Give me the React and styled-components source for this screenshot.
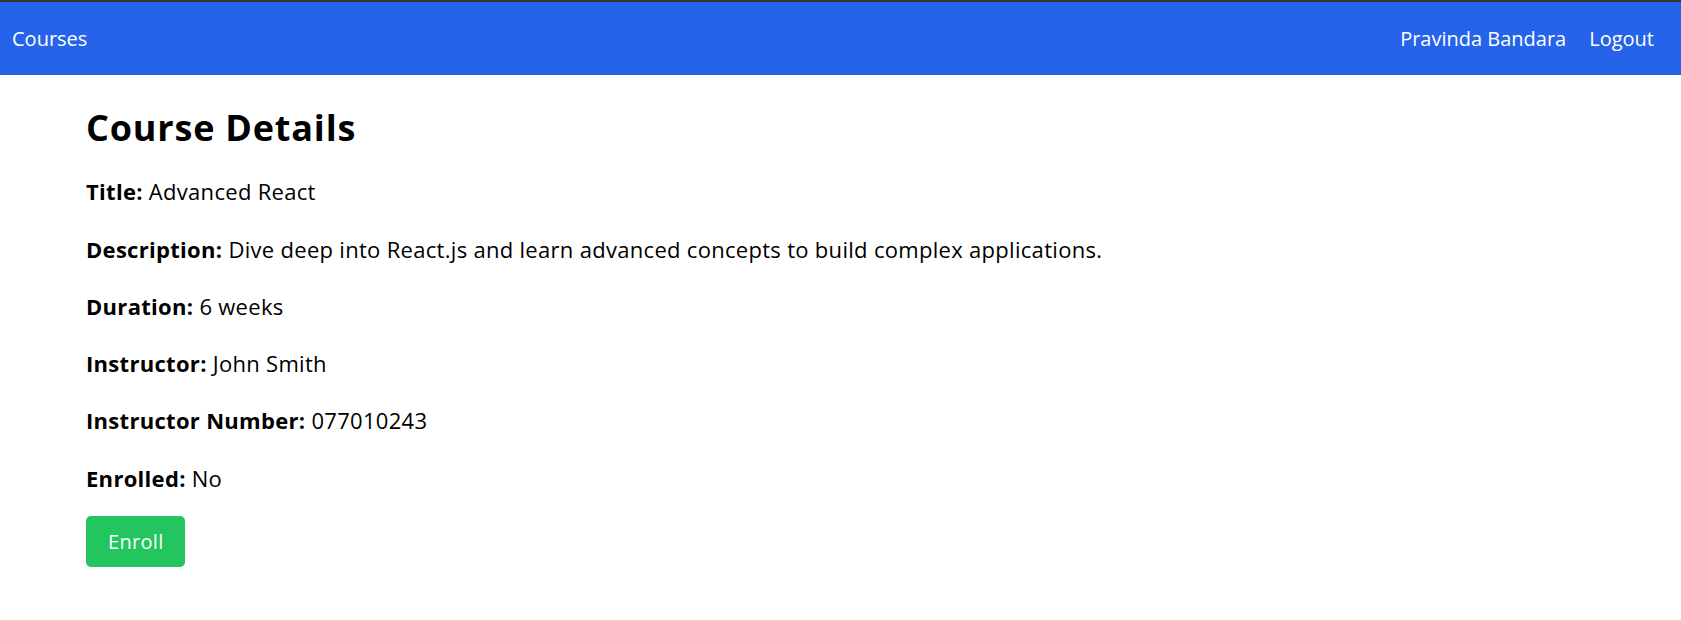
import styled, { createGlobalStyle } from "styled-components";

const GlobalStyle = createGlobalStyle`
  body {
    margin: 0;
    background: #fff;
    font-family: "Open Sans", "Noto Sans", sans-serif;
    color: #000;
  }
`;

const Page = styled.div`
  border-top: 2px solid #363636;
`;

const NavBar = styled.nav`
  height: 73px;
  background-color: #2563eb;
  display: flex;
  align-items: center;
  justify-content: space-between;
  padding: 0 27px 0 12px;
  color: #fff;
  font-size: 20px;
`;

const NavLinks = styled.div`
  display: flex;
  align-items: center;
  gap: 23px;
`;

const NavLink = styled.a`
  color: inherit;
  text-decoration: none;
  cursor: pointer;
`;

const Content = styled.main`
  padding: 31px 86px 40px;
  display: flex;
  flex-direction: column;
  align-items: flex-start;
  gap: 25.3px;
`;

const Heading = styled.h1`
  margin: 0;
  font-size: 36px;
  line-height: 44px;
  font-weight: 700;
  letter-spacing: 0.8px;
`;

const Field = styled.p`
  margin: 0;
  font-size: 22px;
  line-height: 32px;
  letter-spacing: 0.3px;

  strong {
    font-weight: 700;
  }
`;

const EnrollButton = styled.button`
  margin-top: -3px;
  height: 51px;
  padding: 0 22px;
  border: none;
  border-radius: 5px;
  background-color: #22c55e;
  color: #fff;
  font-family: inherit;
  font-size: 20px;
  letter-spacing: 0.3px;
  cursor: pointer;
`;

const course = {
  titre: "Advanced React",
  description:
    "Dive deep into React.js and learn advanced concepts to build complex applications.",
  duration: "6 weeks",
  instructor: "John Smith",
  instructorNumber: "077010243",
  enrolled: false,
};

export default function App() {
  const fields = [
    ["Title", course.titre],
    ["Description", course.description],
    ["Duration", course.duration],
    ["Instructor", course.instructor],
    ["Instructor Number", course.instructorNumber],
    ["Enrolled", course.enrolled ? "Yes" : "No"],
  ];

  return (
    <Page>
      <GlobalStyle />
      <NavBar>
        <NavLink>Courses</NavLink>
        <NavLinks>
          <NavLink>Pravinda Bandara</NavLink>
          <NavLink>Logout</NavLink>
        </NavLinks>
      </NavBar>
      <Content>
        <Heading>Course Details</Heading>
        {fields.map(([label, value]) => (
          <Field key={label}>
            <strong>{label}:</strong> {value}
          </Field>
        ))}
        <EnrollButton>Enroll</EnrollButton>
      </Content>
    </Page>
  );
}
